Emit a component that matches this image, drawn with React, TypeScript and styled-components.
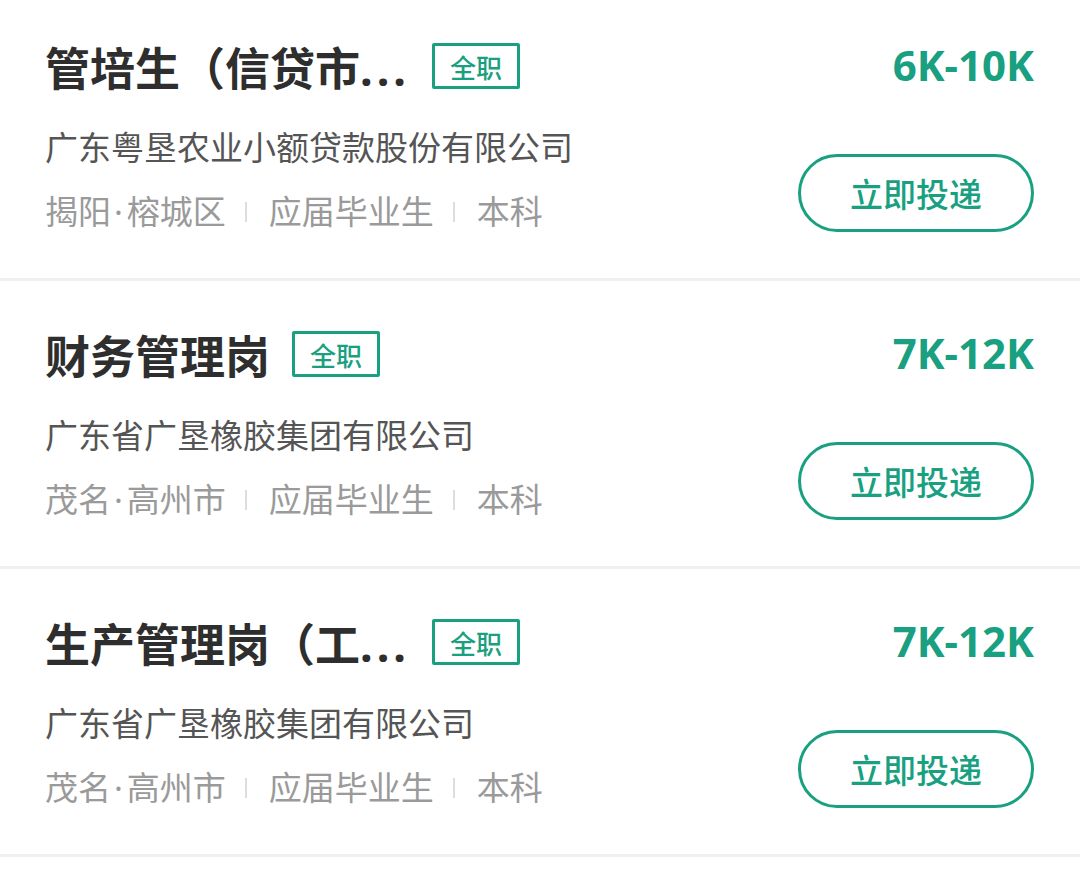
import React from "react"
import styled, { createGlobalStyle } from "styled-components"

const GlobalStyle = createGlobalStyle`
  html, body {
    margin: 0;
    padding: 0;
    background: #ffffff;
  }
  body {
    font-family: "Noto Sans", "Noto Sans CJK SC", sans-serif;
    -webkit-font-smoothing: antialiased;
  }
`

const GREEN = "#19a080"
const MAX_TITLE = 7

interface Job {
  title: string
  type: string
  salary: string
  company: string
  city: string
  district: string
  meta: string[]
}

const jobs: Job[] = [
  {
    title: "管培生（信贷市场营销岗）",
    type: "全职",
    salary: "6K-10K",
    company: "广东粤垦农业小额贷款股份有限公司",
    city: "揭阳",
    district: "榕城区",
    meta: ["应届毕业生", "本科"],
  },
  {
    title: "财务管理岗",
    type: "全职",
    salary: "7K-12K",
    company: "广东省广垦橡胶集团有限公司",
    city: "茂名",
    district: "高州市",
    meta: ["应届毕业生", "本科"],
  },
  {
    title: "生产管理岗（工程技术）",
    type: "全职",
    salary: "7K-12K",
    company: "广东省广垦橡胶集团有限公司",
    city: "茂名",
    district: "高州市",
    meta: ["应届毕业生", "本科"],
  },
]

const List = styled.div`
  margin-top: -7px;
  display: flex;
  flex-direction: column;
`

const Card = styled.div`
  height: 288px;
  box-sizing: border-box;
  padding: 42px 46px 46px 45px;
  display: flex;
  justify-content: space-between;
  border-bottom: 3px solid #f0f0f0;
  background: #fff;
`

const Left = styled.div`
  display: flex;
  flex-direction: column;
  min-width: 0;
`

const TitleRow = styled.div`
  margin-top: 4px;
  height: 60px;
  display: flex;
  align-items: center;
`

const Title = styled.span`
  font-size: 45px;
  font-weight: 700;
  color: #2e2e2e;
  line-height: 60px;
  white-space: nowrap;
`

const Dots = styled.span`
  font-family: "Noto Sans", sans-serif;
  letter-spacing: 4px;
`

const Tag = styled.span`
  margin-left: 22px;
  margin-bottom: 6px;
  width: 88px;
  height: 46px;
  box-sizing: border-box;
  border: 3px solid ${GREEN};
  border-radius: 2px;
  display: flex;
  align-items: center;
  justify-content: center;
  font-family: "Noto Sans CJK SC", sans-serif;
  font-size: 26px;
  font-weight: 500;
  color: ${GREEN};
  flex-shrink: 0;
`

const Company = styled.div`
  margin-top: 24px;
  font-size: 33px;
  line-height: 50px;
  color: #555555;
  white-space: nowrap;
`

const Meta = styled.div`
  margin-top: 14px;
  display: flex;
  align-items: center;
  font-size: 33px;
  line-height: 50px;
  color: #9a9a9a;
  white-space: nowrap;
`

const MidDot = styled.span`
  margin: 0 4px 0 3px;
`

const Divider = styled.span`
  width: 2px;
  height: 20px;
  margin: 0 22px 0 19px;
  background: #dddddd;
`

const Right = styled.div`
  display: flex;
  flex-direction: column;
  align-items: flex-end;
  justify-content: space-between;
`

const Salary = styled.div`
  font-family: "Noto Sans", "Open Sans", sans-serif;
  font-size: 42px;
  font-weight: 700;
  line-height: 60px;
  color: ${GREEN};
`

const ApplyButton = styled.button`
  width: 236px;
  height: 78px;
  box-sizing: border-box;
  border: 3px solid ${GREEN};
  border-radius: 39px;
  background: #fff;
  color: ${GREEN};
  font-family: "Noto Sans CJK SC", sans-serif;
  font-size: 33px;
  font-weight: 500;
  padding: 0;
  cursor: pointer;
`

function JobCard({ job }: { job: Job }) {
  const long = job.title.length > MAX_TITLE
  return (
    <Card>
      <Left>
        <TitleRow>
          <Title>
            {long ? job.title.slice(0, MAX_TITLE) : job.title}
            {long && <Dots>...</Dots>}
          </Title>
          <Tag>{job.type}</Tag>
        </TitleRow>
        <Company>{job.company}</Company>
        <Meta>
          <span>
            {job.city}
            <MidDot>·</MidDot>
            {job.district}
          </span>
          {job.meta.map((m) => (
            <React.Fragment key={m}>
              <Divider />
              <span>{m}</span>
            </React.Fragment>
          ))}
        </Meta>
      </Left>
      <Right>
        <Salary>{job.salary}</Salary>
        <ApplyButton>立即投递</ApplyButton>
      </Right>
    </Card>
  )
}

export default function App() {
  return (
    <>
      <GlobalStyle />
      <List>
        {jobs.map((job, i) => (
          <JobCard key={i} job={job} />
        ))}
      </List>
    </>
  )
}
